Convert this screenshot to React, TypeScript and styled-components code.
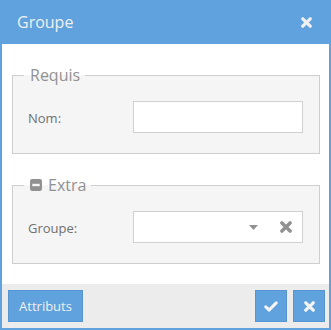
import * as React from 'react'
import styled, { createGlobalStyle } from 'styled-components'

const GlobalStyle = createGlobalStyle`
  html, body {
    margin: 0;
    padding: 0;
    background: #ffffff;
  }
  * {
    box-sizing: border-box;
  }
`

const Window = styled.div`
  width: 331px;
  height: 330px;
  display: flex;
  flex-direction: column;
  border: 2px solid #5fa2dd;
  border-top: none;
  font-family: "Open Sans", "Liberation Sans", sans-serif;
  background: #ffffff;
`

const Header = styled.div`
  height: 44px;
  margin: 0 -2px;
  padding: 0 19px 0 17px;
  display: flex;
  align-items: center;
  justify-content: space-between;
  background: #5fa2dd;
  color: #f0f0f0;
`

const Title = styled.div`
  font-size: 16px;
  line-height: 20px;
  margin-top: -1px;
`

const Body = styled.div`
  flex: 1;
  padding: 21px 9px 0 10px;
  display: flex;
  flex-direction: column;
  gap: 21px;
`

const FieldSet = styled.fieldset`
  margin: 0;
  padding: 16px 16px 20px 15px;
  border: 1px solid #cecece;
  background: #f5f5f5;
`

const Legend = styled.legend`
  margin-left: -4px;
  padding: 0 5px 0 6px;
  font-size: 16px;
  line-height: 20px;
  color: #919191;
  display: flex;
  align-items: center;
  gap: 6px;
`

const Row = styled.div`
  display: flex;
  align-items: center;
`

const Label = styled.label`
  width: 105px;
  font-size: 13px;
  color: #707070;
  padding-top: 2px;
`

const TextInput = styled.input`
  width: 170px;
  height: 32px;
  border: 1px solid #d0d0d0;
  background: #ffffff;
  padding: 0 8px;
  font-family: inherit;
  font-size: 13px;
  outline: none;
`

const Combo = styled.div`
  width: 170px;
  height: 32px;
  border: 1px solid #d0d0d0;
  background: #ffffff;
  display: flex;
  align-items: center;
  justify-content: flex-end;
  padding-right: 10px;
  gap: 22px;
`

const Footer = styled.div`
  height: 44px;
  background: #ececec;
  padding: 6px 4px 0 6px;
  display: flex;
  align-items: flex-start;
  gap: 6px;
`

const Button = styled.button<{ $square?: boolean }>`
  height: 32px;
  width: ${p => (p.$square ? '32px' : '75px')};
  margin: 0;
  padding: 0;
  border: 1px solid #5795d0;
  background: #5fa2dd;
  color: #f0f0f0;
  font-family: inherit;
  font-size: 13px;
  display: flex;
  align-items: center;
  justify-content: center;
  &:first-child {
    margin-right: auto;
  }
`

const Times = ({ size, color }: { size: number; color: string }) => (
  <svg width={size} height={size} viewBox="0 0 10 10">
    <path d="M1.6 1.6 L8.4 8.4 M8.4 1.6 L1.6 8.4" stroke={color} strokeWidth="2.9" strokeLinecap="round" />
  </svg>
)

const Check = () => (
  <svg width="14" height="11" viewBox="0 0 14 11">
    <path d="M1.8 5.8 L5.2 9 L12.2 1.9" stroke="#f4f4f4" strokeWidth="3.1" strokeLinecap="round" strokeLinejoin="round" fill="none" />
  </svg>
)

const MinusSquare = () => (
  <svg width="12" height="12" viewBox="0 0 12 12">
    <rect x="0" y="0" width="12" height="12" rx="2.2" fill="#919191" />
    <rect x="2.3" y="4.8" width="7.4" height="2.4" fill="#f5f5f5" />
  </svg>
)

const Caret = () => (
  <svg width="9" height="5" viewBox="0 0 9 5">
    <path d="M0 0 L9 0 L4.5 5 Z" fill="#919191" />
  </svg>
)

export default function App() {
  return (
    <>
      <GlobalStyle />
      <Window>
        <Header>
          <Title>Groupe</Title>
          <Times size={11} color="#f0f0f0" />
        </Header>
        <Body>
          <FieldSet>
            <Legend>Requis</Legend>
            <Row>
              <Label>Nom:</Label>
              <TextInput />
            </Row>
          </FieldSet>
          <FieldSet>
            <Legend>
              <MinusSquare />
              Extra
            </Legend>
            <Row>
              <Label>Groupe:</Label>
              <Combo>
                <Caret />
                <Times size={12} color="#919191" />
              </Combo>
            </Row>
          </FieldSet>
        </Body>
        <Footer>
          <Button>Attributs</Button>
          <Button $square>
            <Check />
          </Button>
          <Button $square>
            <Times size={11} color="#f4f4f4" />
          </Button>
        </Footer>
      </Window>
    </>
  )
}
